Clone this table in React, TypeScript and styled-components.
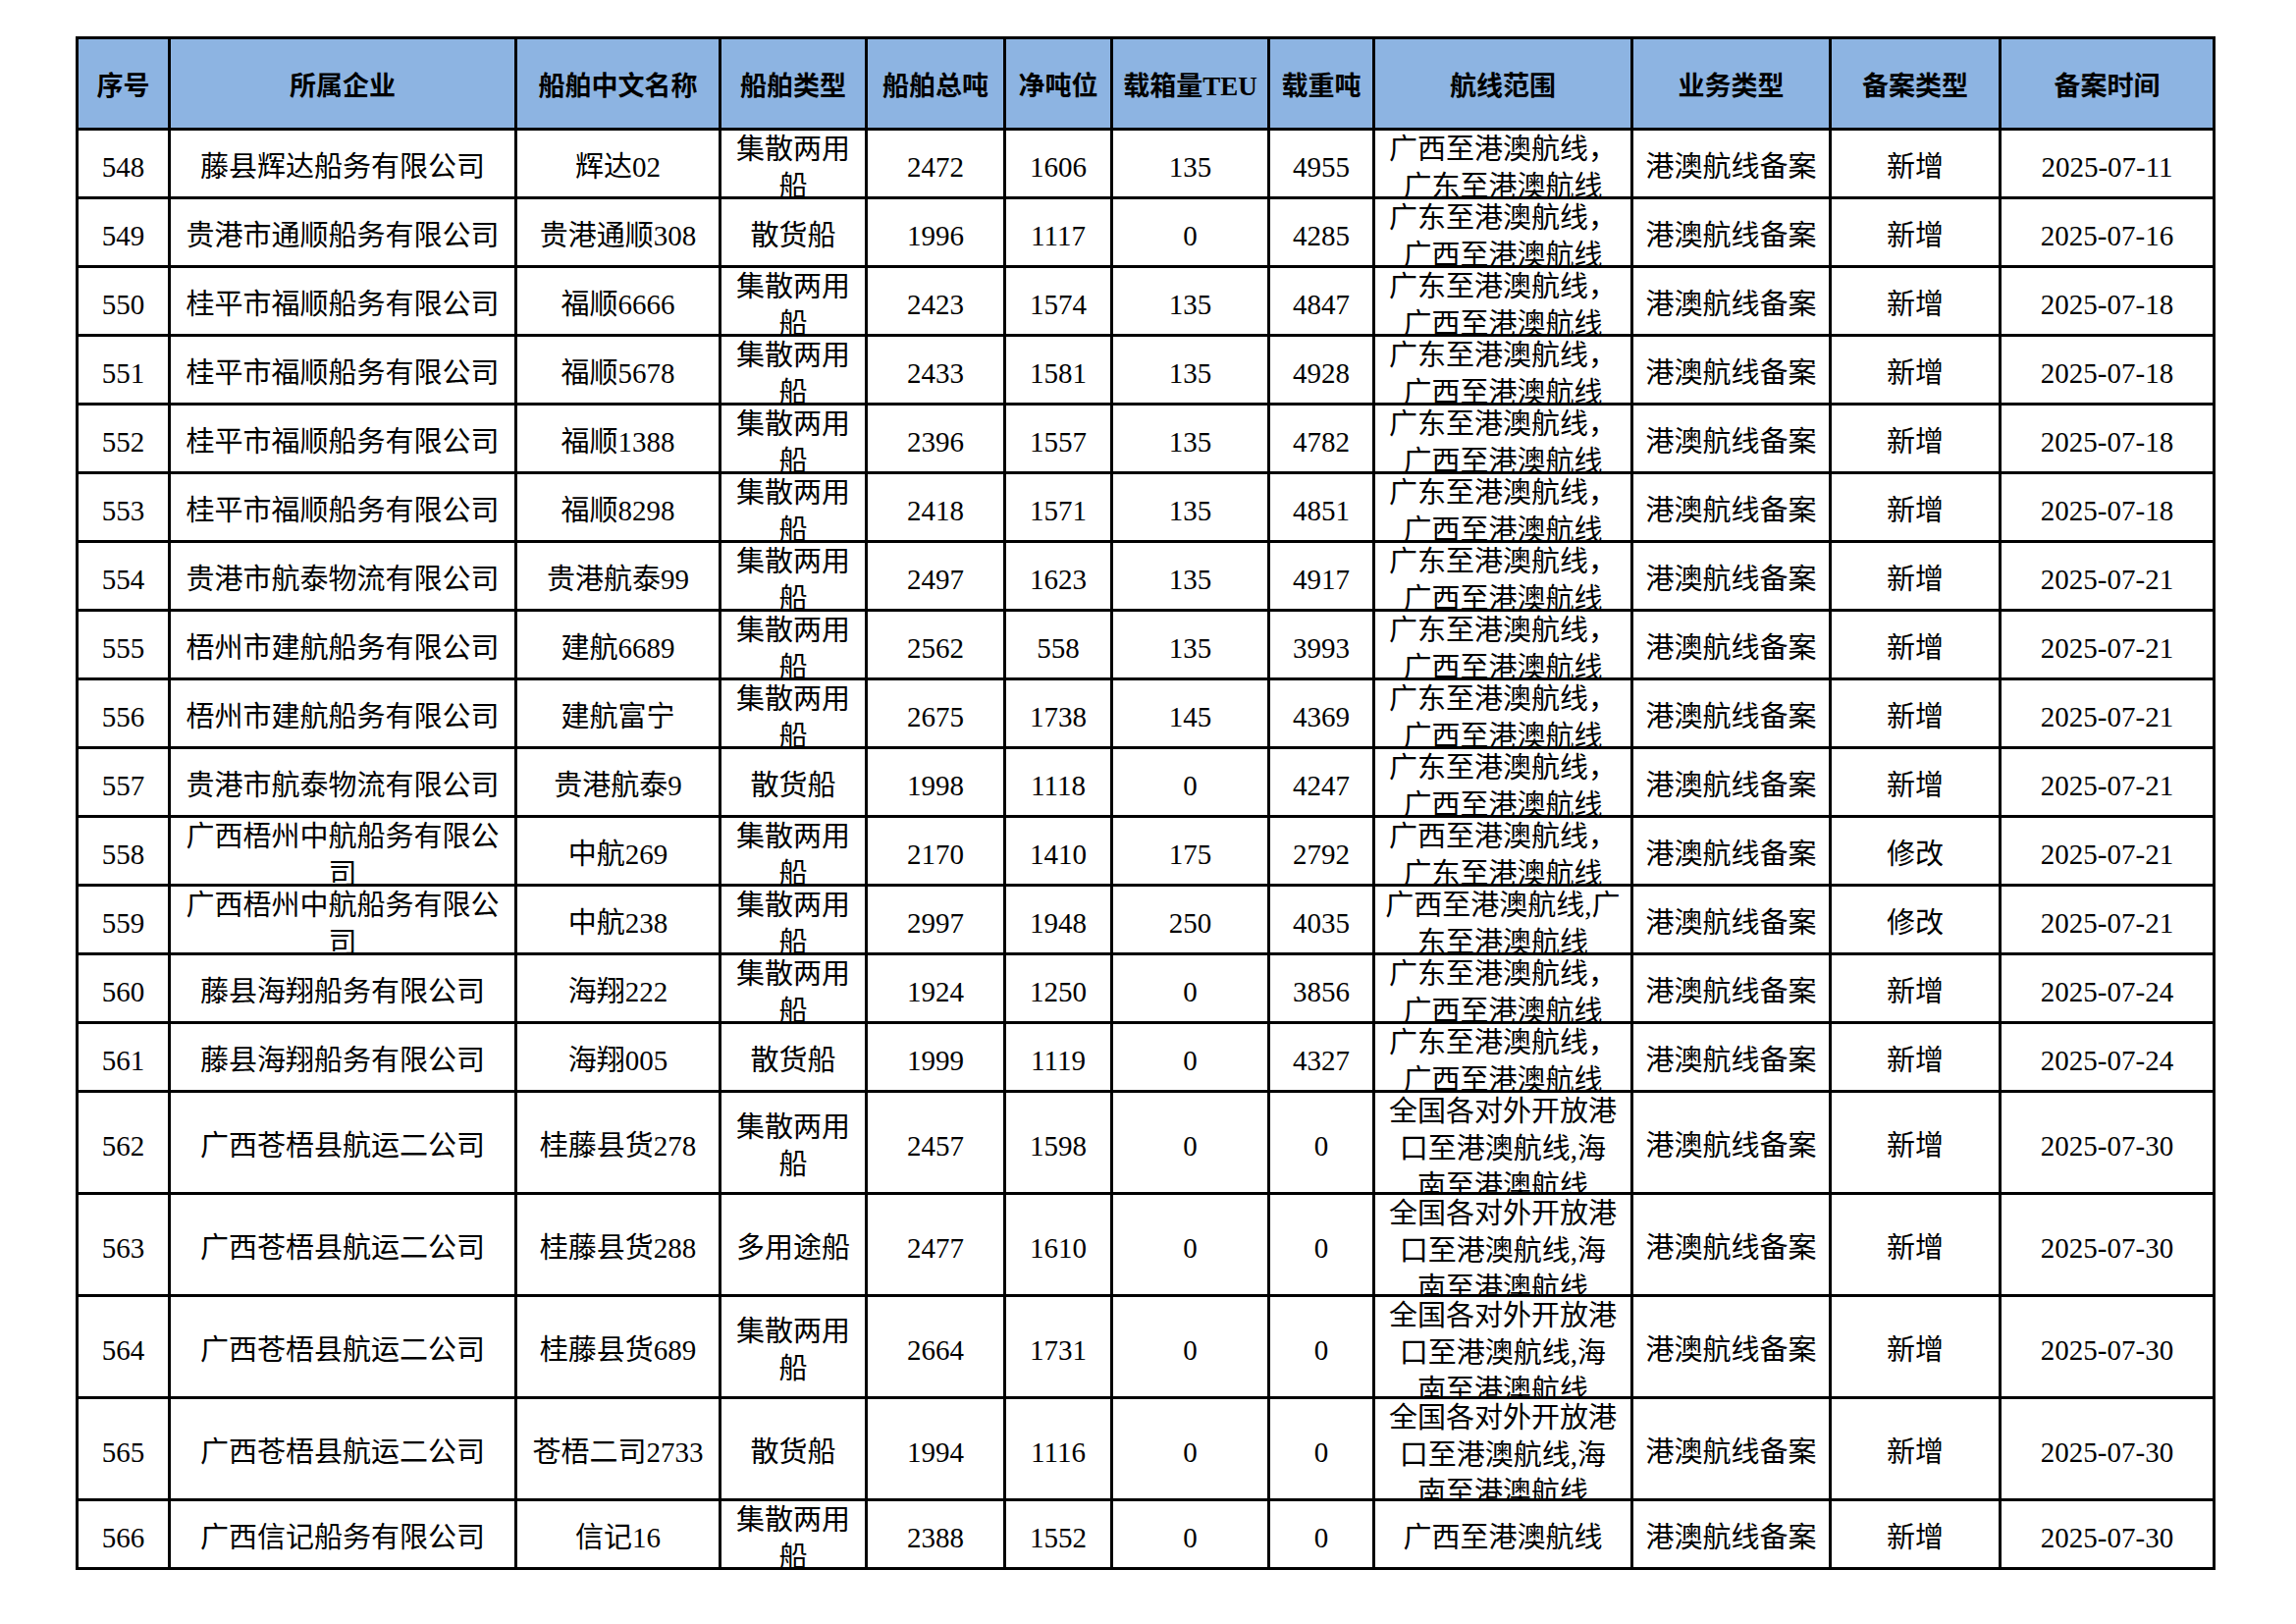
import React from "react";
import styled, { createGlobalStyle } from "styled-components";

const GlobalStyle = createGlobalStyle`
  html, body {
    margin: 0;
    padding: 0;
    background: #ffffff;
  }
  body {
    font-family: "Liberation Serif", "Noto Sans CJK SC", serif;
    color: #000;
  }
`;

// inner widths of the 12 columns, borders are drawn by the 3px gaps
const COLS = "91px 350px 205px 146px 138px 106px 157px 104px 260px 199px 170px 215px";
const LINE = 38;

const Page = styled.div`
  padding: 37px 0 0 77px;
  width: 2339px;
  height: 1654px;
  box-sizing: border-box;
`;

const Table = styled.div`
  display: flex;
  flex-direction: column;
  gap: 3px;
  padding: 3px;
  background: #000;
  width: max-content;
`;

const Row = styled.div<{ $h: number }>`
  display: grid;
  grid-template-columns: ${COLS};
  column-gap: 3px;
  height: ${({ $h }) => $h}px;
`;

// $fit: text fits the cell and is centred; otherwise it starts at the top and is cut at the bottom
const Cell = styled.div<{ $fit: boolean }>`
  display: flex;
  align-items: ${({ $fit }) => ($fit ? "center" : "flex-start")};
  justify-content: center;
  box-sizing: border-box;
  padding-top: ${({ $fit }) => ($fit ? "6px" : "0")};
  overflow: hidden;
  background: #ffffff;
  font-size: 29px;
  line-height: ${LINE}px;
  font-weight: 400;
  text-align: center;
  white-space: pre;
`;

const HeadCell = styled(Cell)`
  background: #8db4e2;
  font-size: 27px;
  font-weight: 700;
`;

const Text = styled.span`
  display: block;
`;

const HEAD = [
  "序号",
  "所属企业",
  "船舶中文名称",
  "船舶类型",
  "船舶总吨",
  "净吨位",
  "载箱量TEU",
  "载重吨",
  "航线范围",
  "业务类型",
  "备案类型",
  "备案时间",
];

const GD = "广东至港澳航线，\n广西至港澳航线";
const GX = "广西至港澳航线，\n广东至港澳航线";
const QG = "全国各对外开放港\n口至港澳航线,海\n南至港澳航线";
const JS = "集散两用\n船";

type Ship = {
  no: string;
  company: string;
  name: string;
  kind: string;
  gross: string;
  net: string;
  teu: string;
  dwt: string;
  route: string;
  change: string;
  date: string;
  tall?: boolean;
};

const rows: Ship[] = [
  { no: "548", company: "藤县辉达船务有限公司", name: "辉达02", kind: JS, gross: "2472", net: "1606", teu: "135", dwt: "4955", route: GX, change: "新增", date: "2025-07-11" },
  { no: "549", company: "贵港市通顺船务有限公司", name: "贵港通顺308", kind: "散货船", gross: "1996", net: "1117", teu: "0", dwt: "4285", route: GD, change: "新增", date: "2025-07-16" },
  { no: "550", company: "桂平市福顺船务有限公司", name: "福顺6666", kind: JS, gross: "2423", net: "1574", teu: "135", dwt: "4847", route: GD, change: "新增", date: "2025-07-18" },
  { no: "551", company: "桂平市福顺船务有限公司", name: "福顺5678", kind: JS, gross: "2433", net: "1581", teu: "135", dwt: "4928", route: GD, change: "新增", date: "2025-07-18" },
  { no: "552", company: "桂平市福顺船务有限公司", name: "福顺1388", kind: JS, gross: "2396", net: "1557", teu: "135", dwt: "4782", route: GD, change: "新增", date: "2025-07-18" },
  { no: "553", company: "桂平市福顺船务有限公司", name: "福顺8298", kind: JS, gross: "2418", net: "1571", teu: "135", dwt: "4851", route: GD, change: "新增", date: "2025-07-18" },
  { no: "554", company: "贵港市航泰物流有限公司", name: "贵港航泰99", kind: JS, gross: "2497", net: "1623", teu: "135", dwt: "4917", route: GD, change: "新增", date: "2025-07-21" },
  { no: "555", company: "梧州市建航船务有限公司", name: "建航6689", kind: JS, gross: "2562", net: "558", teu: "135", dwt: "3993", route: GD, change: "新增", date: "2025-07-21" },
  { no: "556", company: "梧州市建航船务有限公司", name: "建航富宁", kind: JS, gross: "2675", net: "1738", teu: "145", dwt: "4369", route: GD, change: "新增", date: "2025-07-21" },
  { no: "557", company: "贵港市航泰物流有限公司", name: "贵港航泰9", kind: "散货船", gross: "1998", net: "1118", teu: "0", dwt: "4247", route: GD, change: "新增", date: "2025-07-21" },
  { no: "558", company: "广西梧州中航船务有限公\n司", name: "中航269", kind: JS, gross: "2170", net: "1410", teu: "175", dwt: "2792", route: GX, change: "修改", date: "2025-07-21" },
  { no: "559", company: "广西梧州中航船务有限公\n司", name: "中航238", kind: JS, gross: "2997", net: "1948", teu: "250", dwt: "4035", route: "广西至港澳航线,广\n东至港澳航线", change: "修改", date: "2025-07-21" },
  { no: "560", company: "藤县海翔船务有限公司", name: "海翔222", kind: JS, gross: "1924", net: "1250", teu: "0", dwt: "3856", route: GD, change: "新增", date: "2025-07-24" },
  { no: "561", company: "藤县海翔船务有限公司", name: "海翔005", kind: "散货船", gross: "1999", net: "1119", teu: "0", dwt: "4327", route: GD, change: "新增", date: "2025-07-24" },
  { no: "562", company: "广西苍梧县航运二公司", name: "桂藤县货278", kind: JS, gross: "2457", net: "1598", teu: "0", dwt: "0", route: QG, change: "新增", date: "2025-07-30", tall: true },
  { no: "563", company: "广西苍梧县航运二公司", name: "桂藤县货288", kind: "多用途船", gross: "2477", net: "1610", teu: "0", dwt: "0", route: QG, change: "新增", date: "2025-07-30", tall: true },
  { no: "564", company: "广西苍梧县航运二公司", name: "桂藤县货689", kind: JS, gross: "2664", net: "1731", teu: "0", dwt: "0", route: QG, change: "新增", date: "2025-07-30", tall: true },
  { no: "565", company: "广西苍梧县航运二公司", name: "苍梧二司2733", kind: "散货船", gross: "1994", net: "1116", teu: "0", dwt: "0", route: QG, change: "新增", date: "2025-07-30", tall: true },
  { no: "566", company: "广西信记船务有限公司", name: "信记16", kind: JS, gross: "2388", net: "1552", teu: "0", dwt: "0", route: "广西至港澳航线", change: "新增", date: "2025-07-30" },
];

const fits = (text: string, h: number) => text.split("\n").length * LINE <= h;

const App = () => {
  return (
    <>
      <GlobalStyle />
      <Page>
        <Table>
          <Row $h={90}>
            {HEAD.map((h) => (
              <HeadCell key={h} $fit>
                <Text>{h}</Text>
              </HeadCell>
            ))}
          </Row>
          {rows.map((r) => {
            const h = r.tall ? 101 : 67;
            const cells = [
              r.no,
              r.company,
              r.name,
              r.kind,
              r.gross,
              r.net,
              r.teu,
              r.dwt,
              r.route,
              "港澳航线备案",
              r.change,
              r.date,
            ];
            return (
              <Row key={r.no} $h={h}>
                {cells.map((c, i) => (
                  <Cell key={i} $fit={fits(c, h)}>
                    <Text>{c}</Text>
                  </Cell>
                ))}
              </Row>
            );
          })}
        </Table>
      </Page>
    </>
  );
};

export default App;
